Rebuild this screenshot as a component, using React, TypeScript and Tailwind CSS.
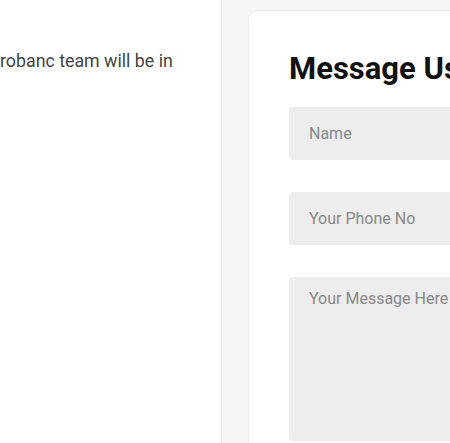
export default function App() {
  return (
    <div className="flex h-[443px] w-[450px] overflow-hidden bg-[#f6f6f6] font-['Roboto',sans-serif]">
      <div className="h-full w-[222px] shrink-0 border-r border-[#ececec] bg-white pt-[48px]">
        <p className="whitespace-nowrap text-[17.8px] leading-[26px] text-[#444]">robanc team will be in</p>
      </div>
      <div className="ml-[26px] mt-[10px] flex-1 min-w-0">
        <div className="w-[420px] rounded-t-[10px] border border-[#ececec] bg-white pl-[40px] pt-[38px]">
          <h2 className="whitespace-nowrap text-[31px] font-bold leading-[40px] text-[#111]">Message Us</h2>
          <form className="mt-[18px] flex flex-col gap-[32px] pb-[2px]">
            <input
              placeholder="Name"
              className="h-[53px] w-full rounded-[4px] bg-[#ededed] px-[20px] text-[16px] text-[#333] outline-none placeholder:text-[#888]"
            />
            <input
              placeholder="Your Phone No"
              className="h-[53px] w-full rounded-[4px] bg-[#ededed] px-[20px] text-[16px] text-[#333] outline-none placeholder:text-[#888]"
            />
            <textarea
              placeholder="Your Message Here"
              className="h-[164px] w-full resize-none rounded-[4px] bg-[#ededed] px-[20px] py-[10px] text-[16px] text-[#333] outline-none placeholder:text-[#888]"
            />
          </form>
        </div>
      </div>
    </div>
  );
}
